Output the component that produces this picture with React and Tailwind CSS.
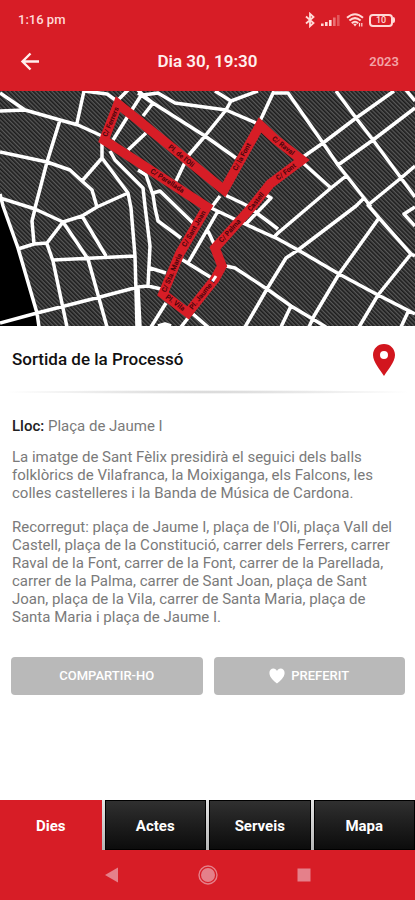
import React, { useState } from 'react';

const STREETS = [
  'M0 93 L25 110 M0 111 L25 110 L60 120 L78 125 L102 136',
  'M77 123 L84 91 L107 94 L117 101 L128 90',
  'M60 120 L47 162 L35 208',
  'M0 152 L47 162 L70 170 L82 181 L92 190 L97 207',
  'M82 181 L102 158 M102 143 L102 158 L128 193 L131 208 L135 256 L137 327',
  'M0 194 L3 206 L18 248 L37 313 L39 327',
  'M0 198 L35 209 L63 222 M82 216 L97 207 L128 193',
  'M142 94 L128 116 L113 140 M146 133 L128 150',
  'M110 151 L115 160 L143 188 L145 206 L150 246 L148 286',
  'M35 209 L32 221 L34 244 M18 249 L34 244 L47 243 L63 222 L82 216',
  'M63 222 L88 259 L107 327 M82 216 L106 256',
  'M47 244 L53 261 L67 327 M53 260 L135 256',
  'M0 323 L37 313 L100 297 L138 287 L148 286 L161 289 M138 287 L140 327',
  'M138 93 L153 103 L205 136 L236 158',
  'M138 90 L143 95 L158 93 L175 103 L226 110 L256 123 M143 116 L153 103 L143 95',
  'M215 91 L231 101 L258 91 M231 101 L226 110 L205 136 L188 156 L176 181',
  'M274 91 L260 121 M274 93 L288 93 L323 143 L338 165 L364 198 L371 207',
  'M138 170 L146 175 L153 195 L155 208 L158 221 L181 238',
  'M153 193 L160 191 L193 223 M150 268 L166 273',
  'M225 195 L246 205 L278 229 M220 196 L211 208 L245 224 L278 239 L298 250',
  'M266 195 L271 198 L246 224 M273 238 L280 231',
  'M218 211 L188 263 M181 259 L215 280 M208 231 L215 246',
  'M226 266 L235 268 L267 289 L291 306 L326 327 M245 327 L267 289 L286 258 L298 250 L356 206 L364 198',
  'M166 303 L151 327 M188 318 L181 327 M193 314 L208 327 M158 326 L165 324 L171 326',
  'M336 91 L356 118 L373 140 L401 178 L415 197',
  'M394 91 L356 118 L323 143 L303 157 M406 90 L415 101',
  'M415 108 L373 140 L338 165 M303 163 L331 188 M346 176 L331 188 L278 233',
  'M415 166 L401 178 L368 205 L379 218 L411 254 L415 256',
  'M379 218 L339 274 L314 316 L309 327 M411 254 L378 295 L359 327',
  'M298 250 L339 274 L378 295 L415 314 M415 207 L404 214 L415 226',
  'M291 306 L281 327 M408 312 L401 327',
];

const ROUTE =
  'M118 104 L104 140 L138 162 L207 207 L180 253 L163 294 L188 313 L215 279 L222 266 L215 248 L251 208 L270 184 L302 160 L276 140 L260 125 L224 190 L138 120 Z';

const ROUTE_LABELS = [
  { x: 111, y: 122, angle: -67, text: 'C/ Ferrers' },
  { x: 181, y: 156, angle: 39, text: "Pl. de l'Oli" },
  { x: 167, y: 181, angle: 33, text: 'C/ Parellada' },
  { x: 242, y: 157, angle: -61, text: 'C/ la Font' },
  { x: 283, y: 146, angle: 38, text: 'C/ Raval' },
  { x: 286, y: 172, angle: -37, text: 'C/ Font' },
  { x: 256, y: 202, angle: -51, text: 'Castell' },
  { x: 230, y: 231, angle: -48, text: 'C/ Palma' },
  { x: 194, y: 229, angle: -60, text: 'C/ Sant Joan' },
  { x: 172, y: 273, angle: -67, text: 'C/ Sta. Maria' },
  { x: 175, y: 303, angle: 37, text: 'Pl. Vila' },
  { x: 202, y: 295, angle: -51, text: 'Pl. Jaume I' },
];

const TABS = ['Dies', 'Actes', 'Serveis', 'Mapa'];

const StatusBar = () => (
  <div className="flex items-center justify-between pl-[18px] pr-5 h-10 text-[#ffd9d6]">
    <span className="text-[13px] font-medium">1:16 pm</span>
    <div className="flex items-center gap-[5px]">
      <svg viewBox="0 0 12 16" className="w-3 h-4" fill="none" stroke="currentColor" strokeWidth="1.8">
        <path d="M2 4.5 L9.5 11 L6 14.2 V1.8 L9.5 5 L2 11.5" />
      </svg>
      <svg viewBox="0 0 20 14" className="w-5 h-3.5" fill="currentColor">
        <rect x="0" y="10.5" width="2.6" height="2.5" />
        <rect x="4" y="9" width="2.6" height="4" />
        <rect x="8" y="7" width="2.6" height="6" />
        <rect x="12" y="4.5" width="2.6" height="8.5" opacity="0.45" />
        <rect x="16" y="2" width="2.6" height="11" opacity="0.3" />
      </svg>
      <svg viewBox="0 0 18 14" className="w-[18px] h-3.5" fill="none" stroke="currentColor" strokeWidth="2">
        <path d="M1 4.8 Q9 -2.2 17 4.8" />
        <path d="M3.4 7.6 Q9 2.6 14.6 7.6" />
        <path d="M5.8 10.2 Q9 7.2 12.2 10.2" />
        <path d="M7 10.8 L9 13.4 L11 10.8 Z" fill="currentColor" stroke="none" />
        <path d="M13.5 10 V13.6 M15.8 10 V13.6" strokeWidth="1.2" />
      </svg>
      <span className="flex items-center">
        <span className="flex items-center justify-center w-6 h-[13px] rounded border-2 border-current text-[9px] leading-none font-medium">
          10
        </span>
        <span className="w-0.5 h-1.5 rounded-r bg-current" />
      </span>
    </div>
  </div>
);

const RouteMap = () => (
  <svg viewBox="0 91 415 235" className="block w-full bg-[#181818]" role="img" aria-label="Mapa">
    <defs>
      <pattern id="hatch" width="3" height="3" patternUnits="userSpaceOnUse" patternTransform="rotate(45)">
        <rect width="3" height="3" fill="#1c1c1c" />
        <rect width="3" height="1.4" fill="#585858" />
      </pattern>
    </defs>
    <rect x="0" y="91" width="415" height="235" fill="url(#hatch)" />
    <path d="M0 194 L3 206 L18 248 L37 313 L39 327 L0 327 Z" fill="#000" />
    <path d={STREETS.join(' ')} fill="none" stroke="#fff" strokeWidth="3.5" strokeLinejoin="round" />
    <path d={ROUTE} fill="none" stroke="#d71d26" strokeWidth="9.5" />
    <path d="M212 282 L216 276" stroke="#fff" strokeWidth="3" />
    {ROUTE_LABELS.map((label) => (
      <text
        key={label.text}
        transform={`translate(${label.x} ${label.y}) rotate(${label.angle})`}
        textAnchor="middle"
        dominantBaseline="central"
        fontSize="7"
        fontWeight="700"
        fill="#4a060c"
      >
        {label.text}
      </text>
    ))}
  </svg>
);

const App = () => {
  const [activeTab, setActiveTab] = useState('Dies');

  return (
    <div className="min-h-screen flex flex-col bg-white font-[Roboto,sans-serif]">
      <header className="bg-[#d71d26]">
        <StatusBar />
        <div className="grid grid-cols-3 items-center h-[51px] px-4 pb-2">
          <button type="button" aria-label="Enrere" className="justify-self-start p-1 text-[#ffefee]">
            <svg viewBox="0 0 20 20" className="w-5 h-5" fill="none" stroke="currentColor" strokeWidth="2.4">
              <path d="M19 9.5 H3 M10.5 1.5 L2.5 9.5 L10.5 17.5" />
            </svg>
          </button>
          <h1 className="text-center text-[17px] font-semibold text-[#ffefee] whitespace-nowrap">Dia 30, 19:30</h1>
          <span className="justify-self-end text-[13px] font-semibold text-[#f3a3a5]">2023</span>
        </div>
      </header>

      <RouteMap />

      <main className="flex-1">
        <div className="flex items-center justify-between h-16 pt-1 pl-3 pr-5">
          <h2 className="text-[17px] font-medium text-[#111]">Sortida de la Processó</h2>
          <button type="button" aria-label="Ubicació">
            <svg viewBox="0 0 22 32" className="w-[22px] h-8">
              <path
                fillRule="evenodd"
                fill="#d2161e"
                d="M11 0 C4.8 0 0 4.8 0 11 C0 18.5 7.5 26 11 32 C14.5 26 22 18.5 22 11 C22 4.8 17.2 0 11 0 Z M11 7 A4 4 0 1 1 11 15 A4 4 0 1 1 11 7 Z"
              />
            </svg>
          </button>
        </div>
        <div className="h-1 bg-radial-[closest-side] from-[#d0d0d0] to-white" />

        <div className="px-3 pt-[22px] text-[15px] leading-[18px] text-[#7a7a7a]">
          <p className="pb-3 leading-5">
            <strong className="font-medium text-[#222]">Lloc:</strong> Plaça de Jaume I
          </p>
          <p className="pb-4">
            La imatge de Sant Fèlix presidirà el seguici dels balls folklòrics de Vilafranca, la Moixiganga, els
            Falcons, les colles castelleres i la Banda de Música de Cardona.
          </p>
          <p>
            Recorregut: plaça de Jaume I, plaça de l'Oli, plaça Vall del Castell, plaça de la Constitució, carrer dels
            Ferrers, carrer Raval de la Font, carrer de la Font, carrer de la Parellada, carrer de la Palma, carrer de
            Sant Joan, plaça de Sant Joan, plaça de la Vila, carrer de Santa Maria, plaça de Santa Maria i plaça de
            Jaume I.
          </p>
        </div>

        <div className="flex gap-[11px] pl-[11px] pr-[10px] pt-[31px]">
          <button
            type="button"
            className="flex-1 h-[38px] rounded bg-[#b9b9b9] text-[13px] font-medium text-white"
          >
            COMPARTIR-HO
          </button>
          <button
            type="button"
            className="flex-1 flex items-center justify-center gap-1.5 h-[38px] rounded bg-[#b9b9b9] text-[13px] font-medium text-white"
          >
            <svg viewBox="0 0 16 16" className="w-4 h-4" fill="currentColor">
              <path d="M8 15.6 C5 13 0.4 9.4 0.4 5 C0.4 2.4 2.2 0.6 4.4 0.6 C6 0.6 7.4 1.5 8 3 C8.6 1.5 10 0.6 11.6 0.6 C13.8 0.6 15.6 2.4 15.6 5 C15.6 9.4 11 13 8 15.6 Z" />
            </svg>
            PREFERIT
          </button>
        </div>
      </main>

      <nav className="grid grid-cols-4 gap-[3px] h-[50px] bg-[linear-gradient(#e5e5e5,#b5b5b5)]">
        {TABS.map((tab) => (
          <button
            key={tab}
            type="button"
            onClick={() => setActiveTab(tab)}
            className={`pt-0.5 border text-[15px] font-bold text-white ${
              tab === activeTab
                ? 'border-[#d71d26] bg-[#d71d26]'
                : 'border-black bg-linear-to-b from-[#303030] to-[#0c0c0c]'
            }`}
          >
            {tab}
          </button>
        ))}
      </nav>

      <footer className="flex items-center justify-center gap-[79px] h-[50px] bg-[#d71d26] text-[#e5808a]">
        <button type="button" aria-label="Torna">
          <svg viewBox="0 0 14 16" className="w-3.5 h-4" fill="currentColor">
            <path d="M0 8 L13 0.5 V15.5 Z" />
          </svg>
        </button>
        <button type="button" aria-label="Inici">
          <svg viewBox="0 0 20 20" className="w-5 h-5" fill="currentColor">
            <circle cx="10" cy="10" r="9" fill="none" stroke="currentColor" strokeWidth="1.4" />
            <circle cx="10" cy="10" r="7" />
          </svg>
        </button>
        <button type="button" aria-label="Recents">
          <svg viewBox="0 0 14 14" className="w-3.5 h-3.5" fill="currentColor">
            <rect x="0.5" y="0.5" width="13" height="13" />
          </svg>
        </button>
      </footer>
    </div>
  );
};

export default App;
